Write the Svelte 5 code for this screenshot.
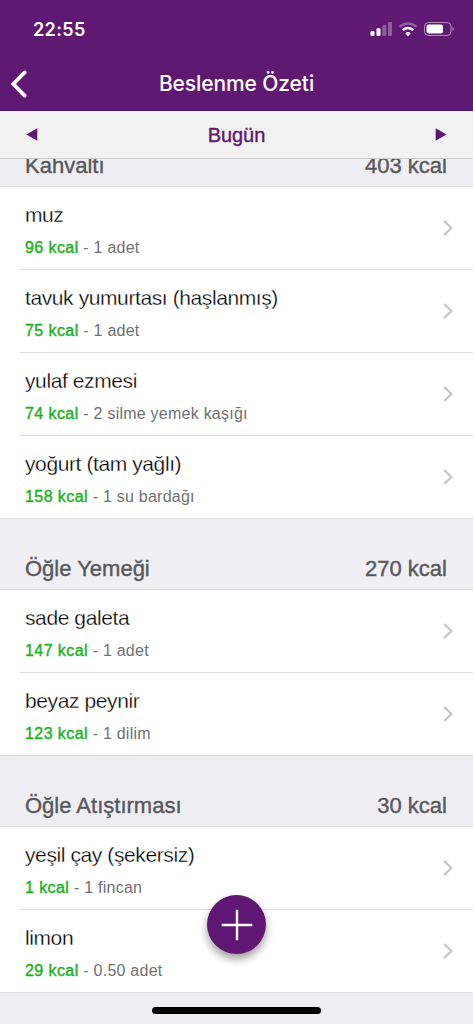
<script>
    let day = 'Bugün';
    let meals = [
        {
            name: 'Kahvaltı',
            total: 403,
            foods: [
                { name: 'muz', kcal: 96, amount: '1 adet' },
                { name: 'tavuk yumurtası (haşlanmış)', kcal: 75, amount: '1 adet' },
                { name: 'yulaf ezmesi', kcal: 74, amount: '2 silme yemek kaşığı' },
                { name: 'yoğurt (tam yağlı)', kcal: 158, amount: '1 su bardağı' }
            ]
        },
        {
            name: 'Öğle Yemeği',
            total: 270,
            foods: [
                { name: 'sade galeta', kcal: 147, amount: '1 adet' },
                { name: 'beyaz peynir', kcal: 123, amount: '1 dilim' }
            ]
        },
        {
            name: 'Öğle Atıştırması',
            total: 30,
            foods: [
                { name: 'yeşil çay (şekersiz)', kcal: 1, amount: '1 fincan' },
                { name: 'limon', kcal: 29, amount: '0.50 adet' }
            ]
        }
    ];
</script>

<div class="screen">
    <header>
        <div class="status">
            <span class="time">22:55</span>
            <svg width="86" height="16" viewBox="0 0 86 16">
                <g fill="#fff">
                    <rect x="0.5" y="10" width="4" height="5" rx="1" />
                    <rect x="6.5" y="7.3" width="4" height="7.7" rx="1" />
                    <rect x="12.3" y="4" width="4" height="11" rx="1" opacity="0.3" />
                    <rect x="18" y="1" width="4" height="14" rx="1" opacity="0.3" />
                </g>
                <g fill="none" stroke="#fff" stroke-width="2.6">
                    <path d="M29.6 5.9a12 12 0 0 1 16.8 0" opacity="0.3" />
                    <path d="M32.8 9.2a7.4 7.4 0 0 1 10.4 0" />
                </g>
                <path d="M38 15.2l-2.8-2.9a4 4 0 0 1 5.6 0z" fill="#fff" />
                <rect x="54.5" y="1.5" width="26.5" height="13" rx="4" fill="none" stroke="#fff" opacity="0.5" />
                <rect x="56.5" y="3.5" width="16.5" height="9" rx="2" fill="#fff" />
                <path d="M82.5 5.8v4.4c1.8-.6 1.8-3.8 0-4.4z" fill="#fff" opacity="0.5" />
            </svg>
        </div>
        <div class="title">
            <svg class="back" width="18" height="28" viewBox="0 0 18 28">
                <path d="M15.6 2.4L4.4 14L15.6 25.6" fill="none" stroke="#fff" stroke-width="3.8" stroke-linecap="round" />
            </svg>
            <h1>Beslenme Özeti</h1>
        </div>
    </header>

    <nav>
        <svg width="12" height="13" viewBox="0 0 12 13"><path d="M11.3 0.3v12.4L0.3 6.5z" fill="#5f1773" /></svg>
        <span>{day}</span>
        <svg width="12" height="13" viewBox="0 0 12 13"><path d="M0.7 0.3v12.4L11.5 6.5z" fill="#5f1773" /></svg>
    </nav>

    <main>
        {#each meals as meal}
            <section>
                <div class="meal">
                    <h2>{meal.name}</h2>
                    <span class="total">{meal.total} kcal</span>
                </div>
                {#each meal.foods as food}
                    <div class="food">
                        <div>
                            <h3>{food.name}</h3>
                            <p><b>{food.kcal} kcal</b> - {food.amount}</p>
                        </div>
                        <svg width="10" height="16" viewBox="0 0 10 16">
                            <path d="M1.2 1L8.4 8L1.2 15" fill="none" stroke="#c4c4c8" stroke-width="2.2" />
                        </svg>
                    </div>
                {/each}
            </section>
        {/each}
    </main>

    <button class="add" aria-label="Ekle">
        <svg width="32" height="32" viewBox="0 0 32 32">
            <path d="M16 0.7v30.6M0.7 16h30.6" stroke="#fff" stroke-width="2.4" />
        </svg>
    </button>
    <div class="home"></div>
</div>

<style>
    :global(body) {
        margin: 0;
    }
    .screen {
        position: relative;
        display: flex;
        flex-direction: column;
        width: 473px;
        height: 1024px;
        overflow: hidden;
        background-color: #efeef3;
        font-family: "Liberation Sans", Arial, sans-serif;
    }
    h1, h2, h3, p {
        margin: 0;
        font-weight: normal;
    }
    svg {
        display: block;
        flex: none;
    }
    header {
        box-sizing: border-box;
        height: 111px;
        flex: none;
        background-color: #5f1973;
        border-bottom: 1px solid #4f1467;
        color: white;
        font-family: Inter, sans-serif;
    }
    .status {
        display: flex;
        justify-content: space-between;
        align-items: center;
        height: 58px;
        padding: 0 17px 0 33px;
    }
    .time {
        font-size: 18px;
        font-weight: 600;
        letter-spacing: 0.4px;
    }
    .title {
        display: grid;
        grid-template-columns: 40px 1fr 40px;
        align-items: center;
        height: 51px;
    }
    .back {
        margin-left: 9px;
    }
    h1 {
        font-size: 21px;
        font-weight: 550;
        letter-spacing: -0.1px;
        text-align: center;
        white-space: nowrap;
    }
    nav {
        box-sizing: border-box;
        display: flex;
        justify-content: space-between;
        align-items: center;
        flex: none;
        height: 48px;
        padding: 0 26px;
        background-color: #f2f2f2;
        border-bottom: 1px solid #cbcbcf;
        color: #5f1773;
        font-size: 20px;
        -webkit-text-stroke: 0.4px;
    }
    nav span {
        padding-top: 2px;
        letter-spacing: -0.1px;
    }
    .meal {
        box-sizing: border-box;
        display: flex;
        justify-content: space-between;
        align-items: flex-end;
        height: 71px;
        padding: 0 26px 8px 25px;
        border-bottom: 1px solid #dddde1;
        color: #58585c;
        font-size: 22px;
        line-height: 24px;
        -webkit-text-stroke: 0.4px;
    }
    /* first heading is scrolled half under the day bar */
    section:first-child .meal {
        height: 28px;
        overflow: hidden;
    }
    h2 {
        font-size: inherit;
    }
    .food {
        box-sizing: border-box;
        display: flex;
        justify-content: space-between;
        align-items: center;
        height: 83px;
        padding: 0 20px 2px 25px;
        background: linear-gradient(#dedee1, #dedee1) 20px 100% / 100% 1px no-repeat white;
    }
    .food:last-child {
        background-position: 0 100%;
    }
    h3 {
        padding-top: 5px;
        color: #000;
        font-size: 21px;
        line-height: 26px;
        letter-spacing: -0.4px;
        /* background-coloured outline keeps the strokes light */
        -webkit-text-stroke: 0.3px white;
    }
    p {
        margin-top: 10px;
        color: #707070;
        font-size: 16px;
        line-height: 20px;
        letter-spacing: 0.24px;
    }
    b {
        color: #1bb01f;
        font-weight: normal;
        letter-spacing: 0.42px;
        -webkit-text-stroke: 0.4px;
    }
    .add {
        position: absolute;
        left: 207px;
        top: 895px;
        display: flex;
        justify-content: center;
        align-items: center;
        width: 59px;
        height: 59px;
        padding: 0;
        border: 0;
        border-radius: 50%;
        background-color: #5f1773;
        box-shadow: 0 5px 8px rgba(0, 0, 0, 0.38);
    }
    .home {
        position: absolute;
        left: 152px;
        top: 1007px;
        width: 169px;
        height: 7px;
        border-radius: 4px;
        background-color: black;
    }
</style>
